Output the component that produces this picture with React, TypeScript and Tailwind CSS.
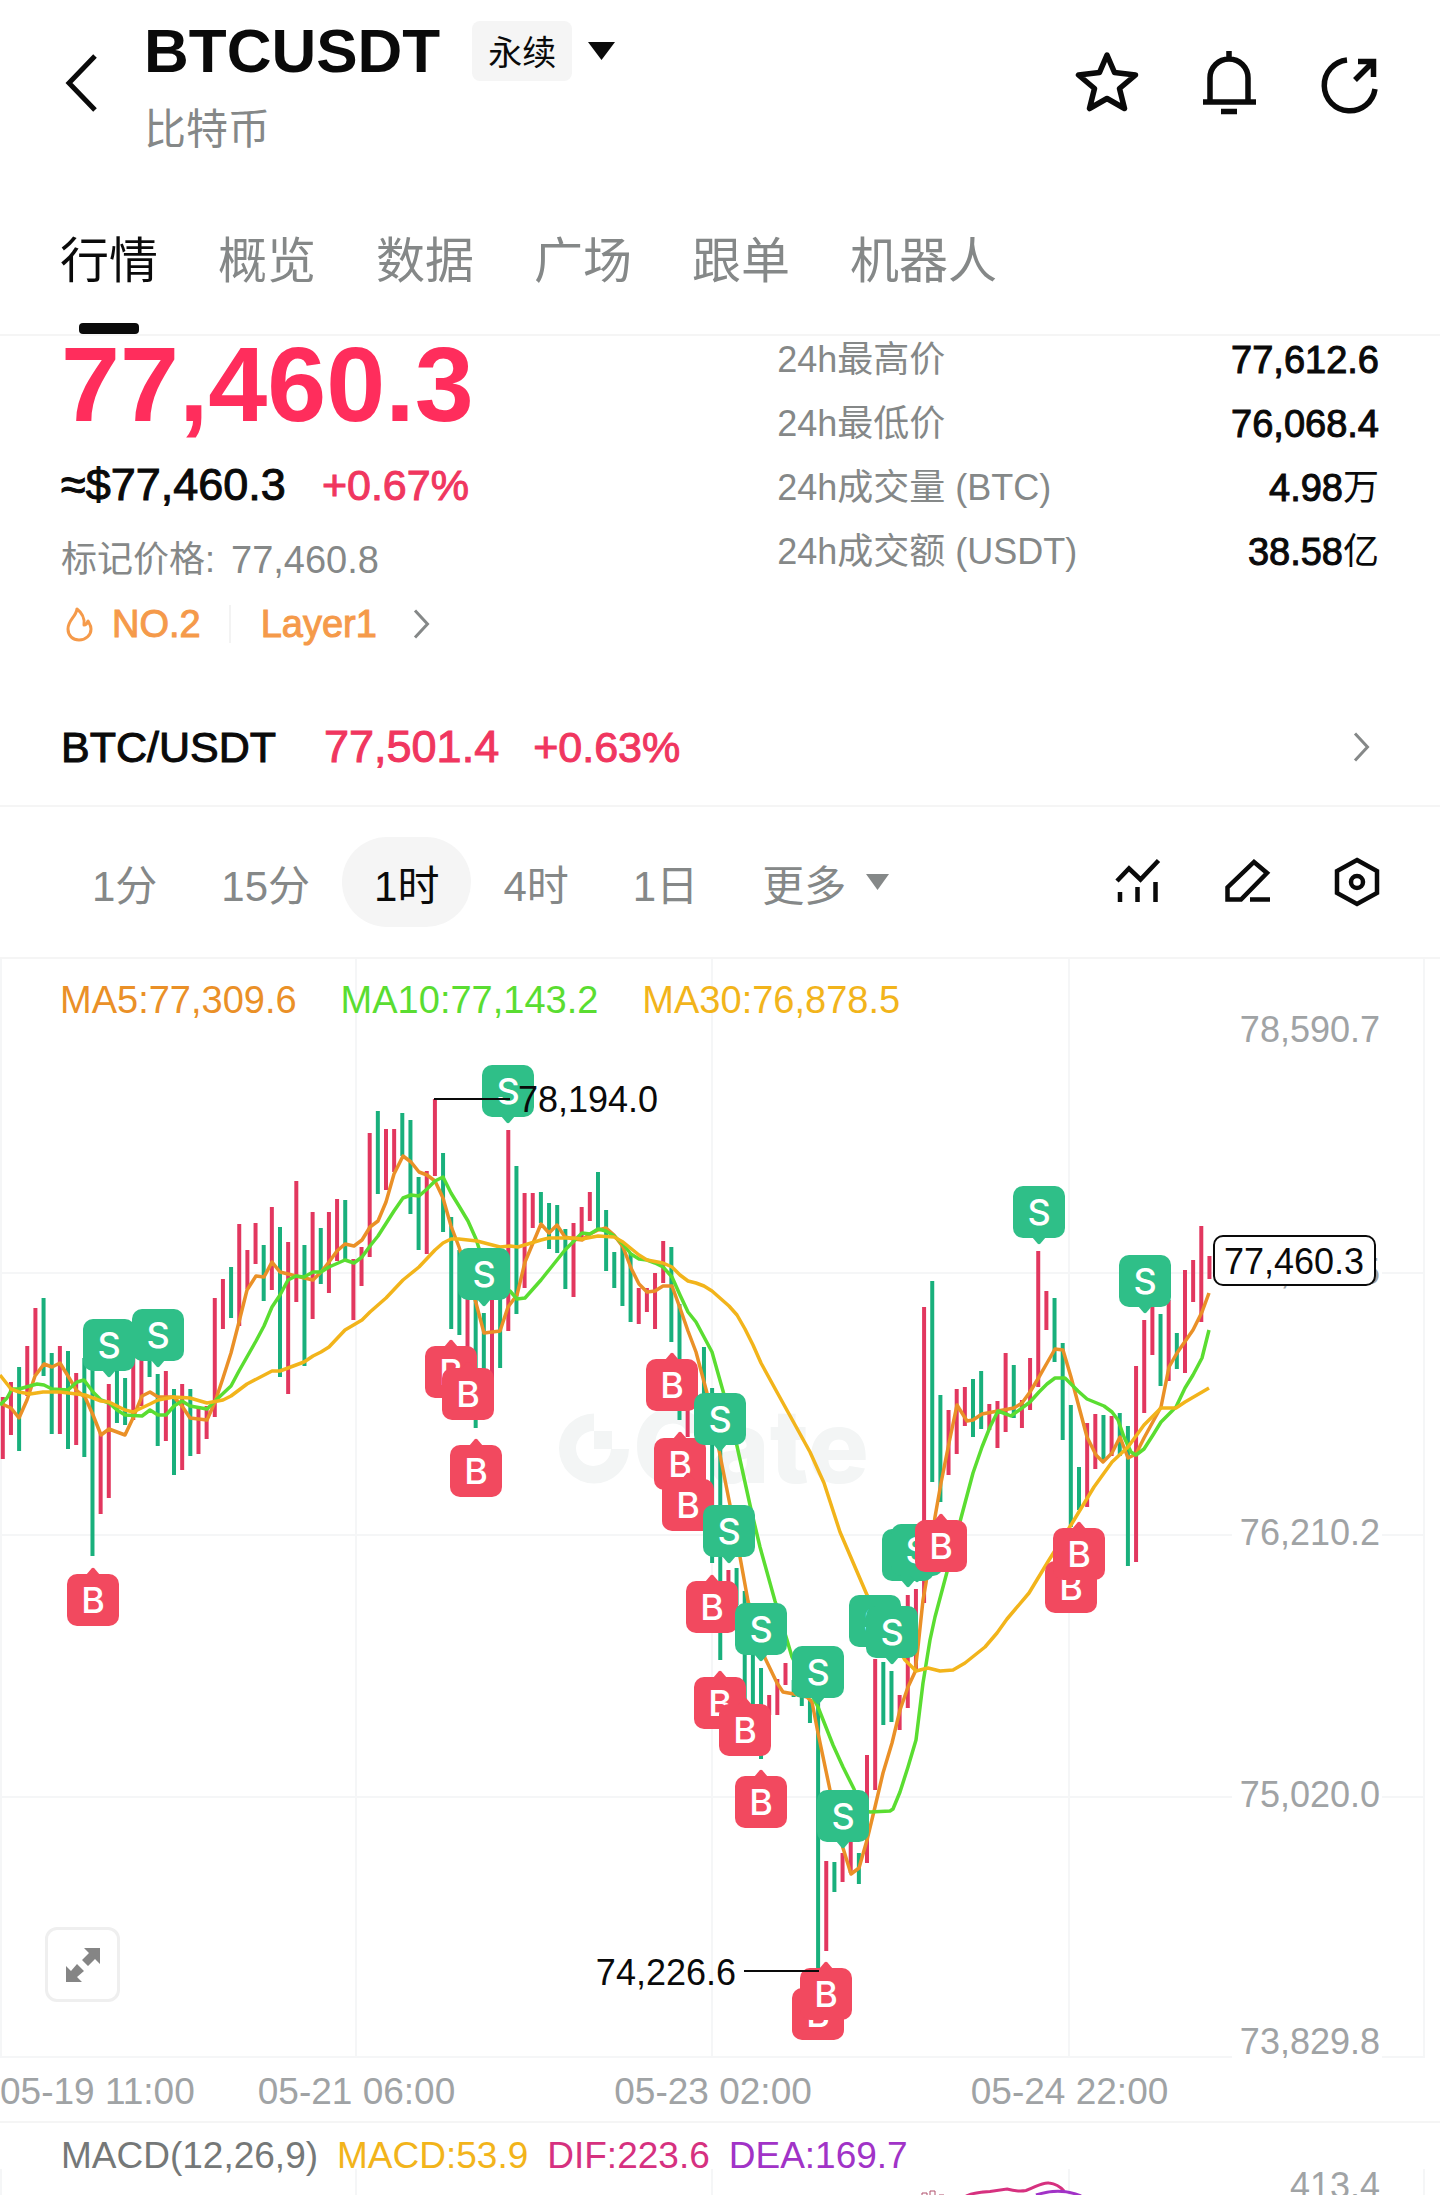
import { useState } from "react";

type Side = "B" | "S";

const TABS = ["行情", "概览", "数据", "广场", "跟单", "机器人"];
const FRAMES = ["1分", "15分", "1时", "4时", "1日"];

const STATS = [
  { label: "24h最高价", value: "77,612.6", unit: "" },
  { label: "24h最低价", value: "76,068.4", unit: "" },
  { label: "24h成交量 (BTC)", value: "4.98", unit: "万" },
  { label: "24h成交额 (USDT)", value: "38.58", unit: "亿" },
];

const DATES = ["05-21 06:00", "05-23 02:00", "05-24 22:00"];

// high / low of every bar, oldest first ("u" = up, "d" = down, "-" = hidden)
const BARS = `u1397,1459 u1382,1435 d1367,1451 u1346,1396 u1308,1375 d1298,1376 d1353,1434 u1346,1434 d1351,1449 u1373,1445
d1358,1457 d1350,1556 u1433,1514 u1384,1498 d1365,1423 d1378,1425 u1350,1420 u1355,1406 d1355,1377 d1374,1446
u1371,1441 d1389,1475 u1384,1470 d1389,1456 u1408,1454 u1406,1439 u1298,1417 u1279,1329 d1267,1318 u1224,1326
u1250,1289 u1223,1264 d1245,1301 u1207,1290 d1227,1377 u1242,1394 u1181,1302 d1245,1366 u1212,1319 d1228,1284
u1212,1293 u1199,1261 d1200,1260 u1259,1320 u1247,1286 u1133,1257 d1111,1194 u1129,1190 u1129,1172 d1113,1156
d1120,1214 d1177,1250 u1171,1254 u1099,1176 d1153,1232 d1217,1329 d1250,1335 u1290,1350 d1290,1428 d1313,1375
u1296,1378 d1290,1368 u1130,1331 d1166,1314 u1193,1288 u1193,1228 d1192,1223 d1203,1249 d1205,1253 d1229,1289
u1223,1297 u1207,1241 u1192,1221 d1172,1230 d1210,1271 d1252,1288 d1244,1306 d1253,1322 u1288,1324 u1288,1312
u1273,1329 u1241,1283 d1247,1342 d1304,1420 u1360,1437 - d1347,1394 d1388,1563 d1445,1660 u1570,1600
d1568,1605 d1591,1700 d1655,1704 d1668,1759 u1695,1715 u1679,1715 u1663,1685 d1680,1697 d1690,1706 d1699,1723
d1703,1971 u1861,1951 d1862,1892 u1853,1882 u1840,1873 d1853,1884 u1755,1863 u1659,1790 d1662,1725 d1671,1722
u1695,1730 u1595,1708 u1589,1670 u1307,1603 d1281,1482 d1395,1502 u1410,1475 u1389,1454 u1387,1426 d1379,1437
d1371,1429 u1404,1430 u1401,1448 u1353,1432 d1365,1418 u1400,1428 u1358,1410 u1251,1387 u1291,1330 d1298,1362
d1343,1440 d1405,1527 d1467,1510 u1423,1507 u1414,1469 d1415,1460 u1416,1456 d1413,1456 d1426,1566 u1366,1562
u1320,1413 u1305,1355 d1314,1386 u1300,1381 d1333,1369 u1270,1373 u1260,1302 u1226,1322 u1256,1279`.split(/\s+/);

const MA5 =
  "0,1403 11,1408 19,1418 27,1400 35,1376 44,1364 52,1367 60,1363 68,1376 77,1391 85,1397 93,1415 101,1435 109,1429 125,1435 133,1418 142,1396 150,1392 158,1397 174,1397 182,1406 190,1418 207,1420 215,1402 223,1378 231,1353 239,1322 247,1290 256,1276 264,1277 272,1262 280,1272 296,1276 313,1280 321,1272 329,1262 337,1251 345,1244 354,1246 362,1240 370,1227 378,1221 386,1202 394,1174 403,1156 411,1162 419,1172 427,1175 435,1181 443,1198 451,1226 459,1247 476,1303 484,1333 500,1331 508,1307 517,1295 525,1262 541,1224 549,1233 557,1225 565,1237 574,1239 582,1240 590,1234 598,1230 606,1228 614,1235 623,1247 631,1268 639,1284 647,1292 655,1291 663,1286 672,1286 680,1308 688,1331 696,1352 707,1393 719,1450 730,1505 740,1557 748,1601 765,1658 777,1683 783,1692 794,1694 807,1697 812,1702 818,1733 830,1790 843,1848 851,1874 859,1868 867,1840 875,1807 883,1773 892,1743 900,1710 908,1687 915,1672 918,1647 923,1600 926,1583 935,1517 941,1483 949,1443 957,1405 967,1421 973,1420 982,1414 998,1411 1014,1408 1022,1403 1030,1392 1039,1377 1047,1363 1055,1349 1063,1350 1071,1377 1079,1407 1087,1437 1096,1455 1103,1462 1112,1453 1120,1437 1128,1458 1136,1454 1144,1438 1161,1407 1169,1367 1177,1353 1193,1330 1202,1312 1209,1293";
const MA10 =
  "0,1405 7,1398 12,1389 19,1389 37,1384 44,1385 52,1389 68,1390 77,1382 84,1380 93,1392 101,1400 109,1403 117,1410 125,1415 142,1416 150,1410 158,1415 166,1415 174,1406 182,1401 190,1406 207,1409 215,1401 231,1386 239,1371 256,1341 264,1326 272,1307 280,1295 288,1280 296,1276 304,1277 313,1272 321,1272 329,1267 345,1260 354,1263 362,1257 370,1246 378,1236 394,1211 403,1198 411,1195 419,1196 427,1189 435,1181 443,1177 451,1193 459,1206 468,1221 476,1239 484,1264 500,1289 510,1291 517,1299 525,1298 541,1280 549,1270 565,1250 574,1241 582,1233 590,1234 598,1229 606,1231 614,1236 623,1244 631,1254 639,1259 647,1260 655,1263 663,1267 672,1277 680,1295 688,1312 696,1322 704,1337 712,1352 723,1391 737,1446 750,1505 760,1547 775,1601 787,1640 792,1657 818,1707 833,1745 843,1767 854,1789 862,1810 870,1812 890,1811 893,1809 900,1792 908,1767 916,1740 923,1683 930,1640 935,1617 947,1572 961,1518 973,1473 982,1447 990,1427 998,1411 1006,1414 1011,1416 1022,1408 1030,1402 1039,1392 1047,1384 1055,1378 1065,1378 1078,1391 1087,1399 1104,1406 1112,1412 1118,1420 1124,1437 1131,1452 1136,1455 1144,1449 1153,1435 1161,1422 1176,1407 1185,1388 1193,1375 1202,1358 1209,1330";
const MA30 =
  "0,1375 11,1389 19,1392 30,1394 43,1392 60,1392 85,1395 101,1401 109,1402 117,1406 125,1410 133,1412 150,1404 158,1400 174,1397 190,1398 207,1403 223,1400 231,1396 247,1384 272,1371 280,1371 296,1365 304,1362 313,1356 321,1352 329,1347 345,1330 362,1320 370,1312 386,1298 403,1280 419,1267 435,1250 443,1243 451,1239 459,1239 477,1241 500,1247 510,1246 518,1247 541,1240 549,1238 574,1238 582,1239 598,1236 614,1237 623,1242 639,1255 647,1260 663,1263 672,1267 680,1275 688,1281 696,1283 704,1286 712,1291 729,1306 737,1315 745,1329 753,1345 761,1363 778,1394 794,1423 810,1452 824,1483 840,1532 867,1595 905,1660 916,1671 928,1668 940,1671 953,1670 965,1663 985,1647 997,1633 1007,1619 1029,1593 1049,1560 1071,1525 1094,1487 1112,1462 1128,1447 1144,1425 1161,1408 1176,1408 1185,1402 1209,1388";

// x = tip of the arrow, y = top of the badge; later ones lie on top
const TRADES: [Side, number, number][] = [
  ["B", 93, 1574],
  ["S", 109, 1319],
  ["S", 158, 1309],
  ["B", 451, 1346],
  ["B", 468, 1368],
  ["B", 476, 1445],
  ["S", 484, 1248],
  ["S", 508, 1065],
  ["B", 672, 1359],
  ["B", 680, 1438],
  ["B", 688, 1479],
  ["B", 712, 1581],
  ["S", 720, 1393],
  ["B", 720, 1677],
  ["S", 729, 1505],
  ["B", 745, 1704],
  ["S", 761, 1603],
  ["B", 761, 1776],
  ["S", 818, 1646],
  ["B", 818, 1988],
  ["B", 826, 1968],
  ["S", 843, 1790],
  ["S", 875, 1595],
  ["S", 892, 1606],
  ["S", 908, 1529],
  ["S", 917, 1524],
  ["B", 941, 1520],
  ["S", 1039, 1186],
  ["B", 1071, 1561],
  ["B", 1079, 1528],
  ["S", 1145, 1255],
];

const AXIS = [
  { y: 1029, text: "78,590.7" },
  { y: 1271, text: "77,400.5" },
  { y: 1532, text: "76,210.2" },
  { y: 1794, text: "75,020.0" },
  { y: 2041, text: "73,829.8" },
];

const GRID_X = [1, 356, 712, 1069, 1424];
const GRID_Y = [1273, 1535, 1797, 2057];

function ChevronRight() {
  return (
    <svg width="17" height="30" viewBox="0 0 17 30" fill="none" stroke="#858888" strokeWidth="3">
      <path d="M2 1.500L14.500 15L2 28.500" />
    </svg>
  );
}

function TradeBadge({ side, x, y }: { side: Side; x: number; y: number }) {
  const buy = side === "B";
  return (
    <g transform={`translate(${x} ${y})`}>
      <g fill={buy ? "#f2495f" : "#2fbf88"}>
        <rect x="-26" y="0" width="52" height="52" rx="10" />
        <path d={buy ? "M-7 1L-1.500 -5.500Q0 -7 1.500 -5.500L7 1Z" : "M-7 51L-1.500 57.500Q0 59 1.500 57.500L7 51Z"} />
      </g>
      <text x="0" y="39" textAnchor="middle" className="fill-white font-['Inter'] text-[36px] font-medium">
        {side}
      </text>
    </g>
  );
}

function PriceChart() {
  return (
    <svg viewBox="0 959 1440 1099" className="block w-full" role="img" aria-label="BTCUSDT 1时">
      <g stroke="#f5f6f7" strokeWidth="2">
        {GRID_X.map((x) => (
          <line key={x} x1={x} x2={x} y1="959" y2="2058" />
        ))}
        {GRID_Y.map((y) => (
          <line key={y} x1="0" x2="1424" y1={y} y2={y} />
        ))}
      </g>

      <g fill="#f3f5f5">
        <path d="M594 1413.500A35 35 0 1 0 629 1449H611A17.500 17.500 0 1 1 594 1431Z" />
        <rect x="594" y="1431" width="18" height="18" />
        <text x="633" y="1483" className="font-['Inter'] text-[102px] font-extrabold">
          Gate
        </text>
      </g>

      {AXIS.map((a) => (
        <g key={a.text}>
          <rect x="1232" y={a.y - 20} width="150" height="38" fill="#fff" />
          <text x="1380" y={a.y + 13} textAnchor="end" className="fill-[#a0a3a5] text-[36px]">
            {a.text}
          </text>
        </g>
      ))}

      {BARS.map((bar, i) => {
        if (bar === "-") return null;
        const [high, low] = bar.slice(1).split(",");
        const x = 2.8 + i * 8.153;
        return (
          <line key={i} x1={x} x2={x} y1={high} y2={low} stroke={bar[0] === "u" ? "#e2375f" : "#19b07c"} strokeWidth="4" />
        );
      })}

      <g fill="none" strokeWidth="3.500" strokeLinejoin="round">
        <polyline points={MA5} stroke="#ea9027" />
        <polyline points={MA10} stroke="#5add31" />
        <polyline points={MA30} stroke="#f2b41b" />
      </g>

      {TRADES.map(([side, x, y]) => (
        <TradeBadge key={`${side}${x}-${y}`} side={side} x={x} y={y} />
      ))}

      <g className="fill-[#0a0a0a] text-[36px]">
        <path d="M434 1099H510M744 1971H819" stroke="#0a0a0a" strokeWidth="2" />
        <text x="518" y="1112">78,194.0</text>
        <text x="736" y="1985" textAnchor="end">
          74,226.6
        </text>
        <rect x="1214" y="1236" width="161" height="49" rx="9" fill="#fff" stroke="#0a0a0a" strokeWidth="2" />
        <text x="1294" y="1274" textAnchor="middle">
          77,460.3
        </text>
      </g>
    </svg>
  );
}

function MacdChart() {
  return (
    <svg viewBox="0 0 1440 72" className="absolute inset-0 w-full" aria-hidden="true">
      <g stroke="#f5f6f7" strokeWidth="2">
        {GRID_X.map((x) => (
          <line key={x} x1={x} x2={x} y1="46" y2="72" />
        ))}
      </g>
      <g fill="none" strokeWidth="3">
        <path d="M922 73V70H927V73M930 73V68H935V73M939 72H944" stroke="#b0506c" strokeWidth="1" />
        <path d="M966 73Q975 69 990 68.500Q1000 67 1007 66Q1018 69 1026 67.500C1036 64 1042 59 1049 60Q1058 61 1064 68" stroke="#d6317f" />
        <path d="M1036 72Q1060 64 1081 73" stroke="#a133c7" />
      </g>
      <text x="1380" y="75" textAnchor="end" className="fill-[#a0a3a5] text-[36px]">
        413.4
      </text>
    </svg>
  );
}

export default function App() {
  const [tab, setTab] = useState("行情");
  const [frame, setFrame] = useState("1时");

  return (
    <div className="min-h-screen overflow-hidden bg-white font-['Liberation_Sans','Noto_Sans_CJK_SC',sans-serif] text-[#0a0a0a]">
      <header className="flex items-center px-[61px] pt-4">
        <button aria-label="返回" className="mr-[45px] mb-1">
          <svg width="38" height="58" viewBox="0 0 38 58" fill="none" stroke="currentColor" strokeWidth="5">
            <path d="M34 2L8 29L34 56" />
          </svg>
        </button>
        <div className="flex-1">
          <div className="flex h-[70px] items-center">
            <h1 className="text-[62px] leading-[70px] font-bold">BTCUSDT</h1>
            <button className="ml-8 flex items-center gap-4">
              <span className="rounded-lg bg-[#f5f5f5] px-4 pt-1 text-[34px] leading-[56px]">永续</span>
              <svg width="27" height="18" viewBox="0 0 27 18" fill="currentColor">
                <path d="M0 0H27L13.500 18Z" />
              </svg>
            </button>
          </div>
          <p className="mt-5 text-[42px] leading-[48px] text-[#858888]">比特币</p>
        </div>
        <div className="mb-1 flex items-center gap-16">
          <button aria-label="收藏">
            <svg width="64" height="64" viewBox="0 0 64 64" fill="none" stroke="currentColor" strokeWidth="5.500" strokeLinejoin="round">
              <path d="M32 4L39.500 21.500L60.500 24L44.500 37.500L49.500 57.500L32 47.500L14.500 57.500L19.500 37.500L3.500 24L24.500 21.500Z" />
            </svg>
          </button>
          <button aria-label="提醒">
            <svg width="54" height="64" viewBox="0 0 54 64" fill="none" stroke="currentColor" strokeWidth="5.500">
              <path d="M26 0V8M7 49V27A19 19 0 0 1 45 27V49M0 51H53M18 60.500H34" />
            </svg>
          </button>
          <button aria-label="分享">
            <svg width="58" height="64" viewBox="0 0 58 64" fill="none" stroke="currentColor" strokeWidth="5.500">
              <path d="M26 9A25.500 25.500 0 1 0 54 38M34 29L52 11M37 10.500H52.500V26" />
            </svg>
          </button>
        </div>
      </header>

      <nav className="flex gap-[60px] border-b-2 border-[#f5f5f5] px-[60px] pt-[75px]">
        {TABS.map((t) => (
          <button
            key={t}
            onClick={() => setTab(t)}
            className={["flex flex-col items-center text-[49px] leading-[64px]", t === tab ? "" : "text-[#858888]"].join(" ")}
          >
            {t}
            <span className={["mt-[30px] h-[11px] w-[60px] rounded", t === tab ? "bg-[#0a0a0a]" : ""].join(" ")} />
          </button>
        ))}
      </nav>

      <section className="grid grid-cols-[25fr_21fr] px-[61px]">
        <div>
          <div className="text-[106px] leading-[96px] font-bold text-[#ff2d5c]">77,460.3</div>
          <div className="mt-[23px] flex gap-9 leading-[60px] [-webkit-text-stroke:1px]">
            <span className="text-[45px]">≈$77,460.3</span>
            <span className="text-[43px] text-[#f0365f]">+0.67%</span>
          </div>
          <div className="mt-5 flex gap-4 leading-[50px] text-[#858888]">
            <span className="text-[36px]">标记价格:</span>
            <span className="text-[38px]">77,460.8</span>
          </div>
          <a href="#layer1" className="mt-[19px] flex h-10 items-center text-[38px] leading-[40px] text-[#f59a4a]">
            <svg width="34" height="36" viewBox="0 0 34 36" fill="none" stroke="currentColor" strokeWidth="3" strokeLinejoin="round">
              <path d="M16 3C15 11 7 14 7 23C7 30 12 34 18 34C25 34 30 29 30 23C30 19 28 17 27 15C26 18 25 19 23 19C24 12 20 6 16 3Z" />
            </svg>
            <span className="ml-[17px] [-webkit-text-stroke:1px]">NO.2</span>
            <span className="mr-[30px] ml-7 h-[38px] w-[2px] bg-[#f3f3f3]" />
            <span className="mr-9 [-webkit-text-stroke:1px]">Layer1</span>
            <ChevronRight />
          </a>
        </div>
        <dl className="flex flex-col gap-4 text-[36px] leading-[48px]">
          {STATS.map((s) => (
            <div key={s.label} className="flex h-12 justify-between">
              <dt className="text-[#858888]">{s.label}</dt>
              <dd className="flex">
                <span className="text-[38px] [-webkit-text-stroke:1px]">{s.value}</span>
                <span>{s.unit}</span>
              </dd>
            </div>
          ))}
        </dl>
      </section>

      <a href="#spot" className="mt-[45px] flex h-[118px] items-center border-b-2 border-[#f5f5f5] pr-[70px] pl-[61px] text-[43px]">
        <span className="[-webkit-text-stroke:1px]">BTC/USDT</span>
        <span className="ml-12 text-[45px] text-[#f0365f] [-webkit-text-stroke:1px]">77,501.4</span>
        <span className="mr-auto ml-[34px] text-[#f0365f] [-webkit-text-stroke:1px]">+0.63%</span>
        <ChevronRight />
      </a>

      <div className="flex items-center border-b-2 border-[#f5f5f5] py-[30px] pr-[60px] pl-[60px] text-[42px] leading-[80px] text-[#858888]">
        {FRAMES.map((f) => (
          <button
            key={f}
            onClick={() => setFrame(f)}
            className={["rounded-full px-8 pt-[10px]", f === frame ? "bg-[#f5f5f5] text-[#0a0a0a]" : ""].join(" ")}
          >
            {f}
          </button>
        ))}
        <button className="mr-auto flex items-center gap-5 pt-[10px] pl-8">
          更多
          <svg width="23" height="16" viewBox="0 0 23 16" fill="currentColor" className="mb-[10px]">
            <path d="M0 0H23L11.500 16Z" />
          </svg>
        </button>
        <div className="flex items-center gap-[61px] text-[#0a0a0a]">
          <button aria-label="指标">
            <svg width="48" height="50" viewBox="0 0 48 50" fill="none" stroke="currentColor" strokeWidth="4.500">
              <path d="M3 24L15 11.500L26.500 22.500L44.500 3.500M6 35V45M23.500 30V45M41.500 25V45" />
            </svg>
          </button>
          <button aria-label="画线">
            <svg width="48" height="50" viewBox="0 0 48 50" fill="none" stroke="currentColor" strokeWidth="4.500">
              <path d="M31 5L44 16L18 42.500H4.500V30.500ZM27 42.500H47" />
            </svg>
          </button>
          <button aria-label="设置">
            <svg width="48" height="50" viewBox="0 0 48 50" fill="none" stroke="currentColor" strokeWidth="4.500">
              <path d="M25 3L45 14V36L25 47L5 36V14Z" />
              <circle cx="25" cy="25" r="6" />
            </svg>
          </button>
        </div>
      </div>

      <section className="relative">
        <PriceChart />
        <div className="absolute top-4 left-[60px] flex gap-11 text-[38px] leading-[50px]">
          <span className="text-[#ea9027]">MA5:77,309.6</span>
          <span className="text-[#5add31]">MA10:77,143.2</span>
          <span className="text-[#f2b41b]">MA30:76,878.5</span>
        </div>
        <button
          aria-label="全屏"
          className="absolute bottom-14 left-[45px] flex h-[75px] w-[75px] items-center justify-center rounded-xl border-3 border-[#efefef] bg-white"
        >
          <svg width="36" height="36" viewBox="0 0 36 36" fill="#858585">
            <path d="M19 1H35V17L30 12L23 19L17 13L24 6ZM17 35H1V19L6 24L12 17L19 24L12 30Z" />
          </svg>
        </button>
      </section>

      <div className="flex h-[65px] items-center gap-[159px] border-b-2 border-[#f5f5f5] pt-1 text-[37px] whitespace-nowrap text-[#a0a3a5]">
        <span className="-mr-24">05-19 11:00</span>
        {DATES.map((d) => (
          <span key={d}>{d}</span>
        ))}
      </div>

      <section className="relative h-[72px] overflow-hidden">
        <MacdChart />
        <div className="relative flex gap-[19px] pt-[9px] pl-[61px] text-[37px] leading-[48px]">
          <span className="text-[#757878]">MACD(12,26,9)</span>
          <span className="text-[#f2b41b]">MACD:53.9</span>
          <span className="text-[#d6317f]">DIF:223.6</span>
          <span className="text-[#a133c7]">DEA:169.7</span>
        </div>
      </section>
    </div>
  );
}
